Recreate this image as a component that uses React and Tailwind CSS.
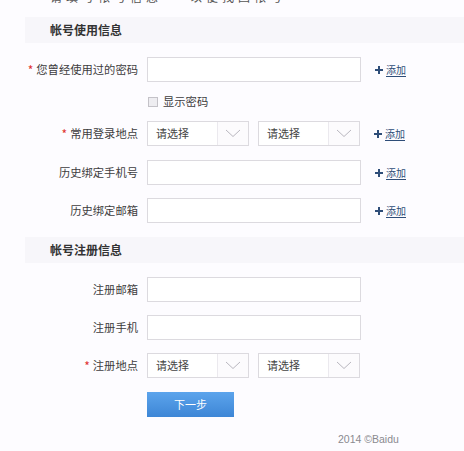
import React from "react";

const FONT = { fontFamily: '"Noto Sans CJK SC", "Noto Sans", sans-serif' };

function Label({ children, required }) {
  return (
    <div className="w-[139px] h-[25px] shrink-0 pr-[1px] flex items-center justify-end text-[11.3px] text-[#3d3d40] leading-none whitespace-nowrap">
      {required && <span className="text-[#e0322f] mr-[3px] text-[12px] leading-none">*</span>}
      <span>{children}</span>
    </div>
  );
}

function Input() {
  return <div className="ml-[8px] w-[214px] h-[25px] bg-white border border-[#dcdadf]" />;
}

function Chevron() {
  return (
    <svg width="16" height="9" viewBox="0 0 16 9" fill="none">
      <path d="M1 1 L8 7.5 L15 1" stroke="#b9b7bf" strokeWidth="1" />
    </svg>
  );
}

function Select({ className = "" }) {
  return (
    <div className={`w-[102px] h-[25px] bg-white border border-[#dcdadf] flex items-stretch ${className}`}>
      <div className="w-[70px] border-r border-[#ebe9ee] pl-[8px] text-[11px] text-[#444] leading-[23px]">请选择</div>
      <div className="flex-1 flex items-center justify-center bg-[#fcfbfd]">
        <Chevron />
      </div>
    </div>
  );
}

function Add() {
  return (
    <div className="ml-[14px] flex items-center text-[#2e4d78]">
      <svg width="8" height="8" viewBox="0 0 8 8" className="mr-[3px]">
        <path d="M3 0h2v3h3v2H5v3H3V5H0V3h3z" fill="#2e4d78" />
      </svg>
      <span className="text-[10px] underline underline-offset-2 leading-none">添加</span>
    </div>
  );
}

function Header({ children, className = "" }) {
  return (
    <div className={`ml-[25px] h-[26px] bg-[#f7f6fa] pl-[25px] flex items-center text-[12px] font-bold text-[#333] ${className}`}>
      {children}
    </div>
  );
}

export default function App() {
  return (
    <div className="w-[464px] h-[451px] bg-[#fdfcff] overflow-hidden flex flex-col" style={FONT}>
      <div className="h-[5px] overflow-hidden pl-[50px]">
        <div className="mt-[-10px] text-[12px] leading-[14px] text-[#555] tracking-[4px]">请填写帐号信息 — 以便找回帐号</div>
      </div>
      <Header className="mt-[12px]">帐号使用信息</Header>

      <div className="mt-[14px] flex items-center">
        <Label required>您曾经使用过的密码</Label>
        <Input />
        <Add />
      </div>

      <div className="mt-[13px] h-[13px] flex items-center pl-[148px]">
        <div className="w-[10px] h-[10px] border border-[#c4c2c8] bg-[#eeedf1]" />
        <span className="ml-[5px] text-[11.3px] text-[#3d3d40] leading-none">显示密码</span>
      </div>

      <div className="mt-[13px] flex items-center">
        <Label required>常用登录地点</Label>
        <Select className="ml-[8px]" />
        <Select className="ml-[9px]" />
        <Add />
      </div>

      <div className="mt-[14px] flex items-center">
        <Label>历史绑定手机号</Label>
        <Input />
        <Add />
      </div>

      <div className="mt-[13px] flex items-center">
        <Label>历史绑定邮箱</Label>
        <Input />
        <Add />
      </div>

      <Header className="mt-[14px]">帐号注册信息</Header>

      <div className="mt-[14px] flex items-center">
        <Label>注册邮箱</Label>
        <Input />
      </div>

      <div className="mt-[13px] flex items-center">
        <Label>注册手机</Label>
        <Input />
      </div>

      <div className="mt-[13px] flex items-center">
        <Label required>注册地点</Label>
        <Select className="ml-[8px]" />
        <Select className="ml-[9px]" />
      </div>

      <div className="mt-[14px] pl-[147px]">
        <div className="w-[87px] h-[25px] bg-linear-to-b from-[#5ca4ec] to-[#3d86d6] text-white text-[11px] flex items-center justify-center">
          下一步
        </div>
      </div>

      <div className="mt-[15px] pl-[338px] text-[10.5px] text-[#8a8a8f]" style={{ fontFamily: '"Liberation Sans", Arial, sans-serif' }}>
        2014 ©Baidu
      </div>
    </div>
  );
}
